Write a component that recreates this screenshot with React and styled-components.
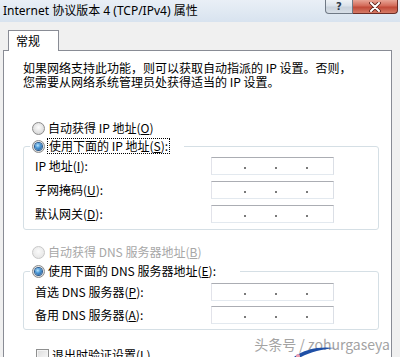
import React from 'react';
import styled, { createGlobalStyle } from 'styled-components';

const Global = createGlobalStyle`
  html, body { margin: 0; padding: 0; background: #f0f0f0; }
  body { font-family: "Noto Sans CJK SC", sans-serif; }
`;

const Window = styled.div`
  position: relative;
  width: 400px;
  height: 357px;
  overflow: hidden;
  background: #f0f0f0;
  font-family: "Noto Sans CJK SC", "Noto Sans", sans-serif;
  font-size: 12px;
  color: #000;
`;

const TitleBar = styled.div`
  height: 22px;
  display: flex;
  align-items: flex-start;
  justify-content: space-between;
  background: linear-gradient(to bottom, #e9eff6, #d8e3ef);
`;

const Title = styled.div`
  padding: 2px 0 0 3px;
  font-family: "Noto Sans", "Noto Sans CJK SC", sans-serif;
  font-size: 12px;
  line-height: 17px;
  color: #000;
  white-space: nowrap;
`;

const Controls = styled.div`
  display: flex;
  margin-right: 2px;
`;

const CaptionButton = styled.div`
  box-sizing: border-box;
  height: 14px;
  width: ${p => (p.$close ? 45 : 28)}px;
  display: flex;
  align-items: center;
  justify-content: center;
  border: 1px solid ${p => (p.$close ? '#6b2d26' : '#6f7985')};
  border-top: none;
  ${p => (p.$close ? 'border-left: none;' : '')}
  border-radius: ${p => (p.$close ? '0 0 4px 0' : '0 0 0 4px')};
  background: ${p =>
    p.$close
      ? 'linear-gradient(to bottom, #e8a596 0%, #d36a58 45%, #c14a38 55%, #d57a66 100%)'
      : 'linear-gradient(to bottom, #eef2f6 0%, #dbe2ea 45%, #c9d2dc 55%, #d8dfe7 100%)'};
  color: #2d3a4a;
  font-family: "DejaVu Sans", sans-serif;
  font-weight: bold;
  font-size: 10px;
  line-height: 12px;
`;

const Body = styled.div`
  padding: 8px 0 0 3px;
`;

const TabStrip = styled.div`
  display: flex;
  padding-left: 5px;
`;

const Tab = styled.div`
  position: relative;
  z-index: 1;
  box-sizing: border-box;
  width: 51px;
  height: 21px;
  margin-bottom: -1px;
  padding-left: 7px;
  border: 1px solid #898c95;
  border-bottom: none;
  background: #fff;
  font-size: 12px;
  line-height: 19px;
`;

const Panel = styled.div`
  box-sizing: border-box;
  width: 389px;
  min-height: 320px;
  padding: 10px 12px 20px 19px;
  border: 1px solid #898c95;
  background: #fff;
`;

const Intro = styled.p`
  margin: 0;
  font-size: 12px;
  line-height: 14px;
  white-space: nowrap;
`;

const Choice = styled.label`
  display: flex;
  align-items: center;
  gap: 3px;
  height: 18px;
  margin: ${p => p.$mt || 0}px 0 0 ${p => (p.$inLegend ? 2 : 9)}px;
  color: ${p => (p.$disabled ? '#a7a7a7' : '#000')};
  white-space: nowrap;
  line-height: 14px;
`;

const Radio = styled.span`
  flex: none;
  box-sizing: border-box;
  width: 13px;
  height: 13px;
  border-radius: 50%;
  border: 1px solid ${p => (p.$disabled ? '#c8c8c8' : '#8b8b8b')};
  background: ${p =>
    p.$disabled
      ? 'radial-gradient(circle at 50% 40%, #fafafa, #e6e6e6 80%)'
      : 'radial-gradient(circle at 50% 40%, #fdfdfd, #d4d4d4 85%)'};
  display: flex;
  align-items: center;
  justify-content: center;
  &::after {
    content: '';
    display: ${p => (p.$checked ? 'block' : 'none')};
    width: 7px;
    height: 7px;
    border-radius: 50%;
    background: radial-gradient(circle at 40% 35%, #b9e6ff 0%, #4d9ad8 40%, #1b4f8c 100%);
    box-shadow: 0 0 0 1px #2a5a8e;
  }
`;

const Check = styled.span`
  flex: none;
  box-sizing: border-box;
  width: 13px;
  height: 13px;
  border: 1px solid #8e8f8f;
  background: linear-gradient(135deg, #dcdcdc, #fbfbfb);
  box-shadow: inset 0 0 0 1px #f4f4f4;
`;

const Focus = styled.span`
  outline: 1px dotted #000;
  outline-offset: 0;
  padding: 0 1px;
`;

const Group = styled.fieldset`
  margin: ${p => p.$mt || 0}px 0 0 0;
  padding: ${p => p.$pt}px 0 ${p => p.$pb}px 6px;
  min-width: 0;
  border: 1px solid #d5dfe5;
  border-radius: 3px;
`;

const Legend = styled.legend`
  padding: 0 ${p => p.$pr}px 0 0;
  margin: 0;
`;

const Fields = styled.div`
  display: grid;
  grid-template-columns: 176px 123px;
  row-gap: ${p => p.$gap}px;
  align-items: center;
  margin-left: 5px;
`;

const FieldLabel = styled.span`
  white-space: nowrap;
  line-height: 14px;
`;

const IpBox = styled.div`
  box-sizing: border-box;
  width: 123px;
  height: 18px;
  display: flex;
  align-items: center;
  gap: 29px;
  padding: 4px 0 0 32px;
  border: 1px solid;
  border-color: #abadb3 #dbdfe6 #e3e9ef #e2e3ea;
  background: #fff;
`;

const Dot = styled.span`
  width: 2px;
  height: 2px;
  background: #7a7a7a;
`;

const Watermark = styled.div`
  position: absolute;
  right: 10px;
  top: 335px;
  font-family: "Noto Sans CJK SC", sans-serif;
  font-size: 14px;
  line-height: 18px;
  color: #a3a3a3;
  text-shadow: 0 0 2px #fff, 0 0 1px #fff;
  white-space: nowrap;
`;

const Logo = styled.svg`
  position: absolute;
  left: 290px;
  top: 345px;
`;

const IpField = () => (
  <IpBox>
    <Dot />
    <Dot />
    <Dot />
  </IpBox>
);

export default function App() {
  return (
    <Window>
      <Global />
      <TitleBar>
        <Title>Internet 协议版本 4 (TCP/IPv4) 属性</Title>
        <Controls>
          <CaptionButton>?</CaptionButton>
          <CaptionButton $close>
            <svg width="14" height="10" viewBox="0 0 14 10">
              <path d="M3 1 L11 9 M11 1 L3 9" stroke="#5a1f18" strokeWidth="3.6" strokeLinecap="round" />
              <path d="M3 1 L11 9 M11 1 L3 9" stroke="#ffffff" strokeWidth="2" strokeLinecap="round" />
            </svg>
          </CaptionButton>
        </Controls>
      </TitleBar>
      <Body>
        <TabStrip>
          <Tab>常规</Tab>
        </TabStrip>
        <Panel>
          <Intro>
            如果网络支持此功能，则可以获取自动指派的 IP 设置。否则，
            <br />
            您需要从网络系统管理员处获得适当的 IP 设置。
          </Intro>

          <Choice $mt={30}>
            <Radio />
            <span>自动获得 IP 地址(<u>O</u>)</span>
          </Choice>

          <Group $pt={2} $pb={6}>
            <Legend $pr={15}>
              <Choice $inLegend>
                <Radio $checked />
                <Focus>使用下面的 IP 地址(<u>S</u>):</Focus>
              </Choice>
            </Legend>
            <Fields $gap={6}>
              <FieldLabel>IP 地址(<u>I</u>):</FieldLabel>
              <IpField />
              <FieldLabel>子网掩码(<u>U</u>):</FieldLabel>
              <IpField />
              <FieldLabel>默认网关(<u>D</u>):</FieldLabel>
              <IpField />
            </Fields>
          </Group>

          <Choice $mt={13} $disabled>
            <Radio $disabled />
            <span>自动获得 DNS 服务器地址(<u>B</u>)</span>
          </Choice>

          <Group $mt={1} $pt={3} $pb={5}>
            <Legend $pr={24}>
              <Choice $inLegend>
                <Radio $checked />
                <span>使用下面的 DNS 服务器地址(<u>E</u>):</span>
              </Choice>
            </Legend>
            <Fields $gap={5}>
              <FieldLabel>首选 DNS 服务器(<u>P</u>):</FieldLabel>
              <IpField />
              <FieldLabel>备用 DNS 服务器(<u>A</u>):</FieldLabel>
              <IpField />
            </Fields>
          </Group>

          <Choice $mt={16} style={{ marginLeft: 13 }}>
            <Check />
            <span>退出时验证设置(<u>L</u>)</span>
          </Choice>
        </Panel>
      </Body>
      <Watermark>头条号 / zohurgaseya</Watermark>
      <Logo width="46" height="12" viewBox="0 0 46 12">
        <path d="M4 12 C 14 4, 30 1, 45 3 C 33 4, 20 7, 11 12 Z" fill="#1f4fa6" />
        <circle cx="8" cy="11" r="2" fill="#f0a0b0" />
      </Logo>
    </Window>
  );
}
